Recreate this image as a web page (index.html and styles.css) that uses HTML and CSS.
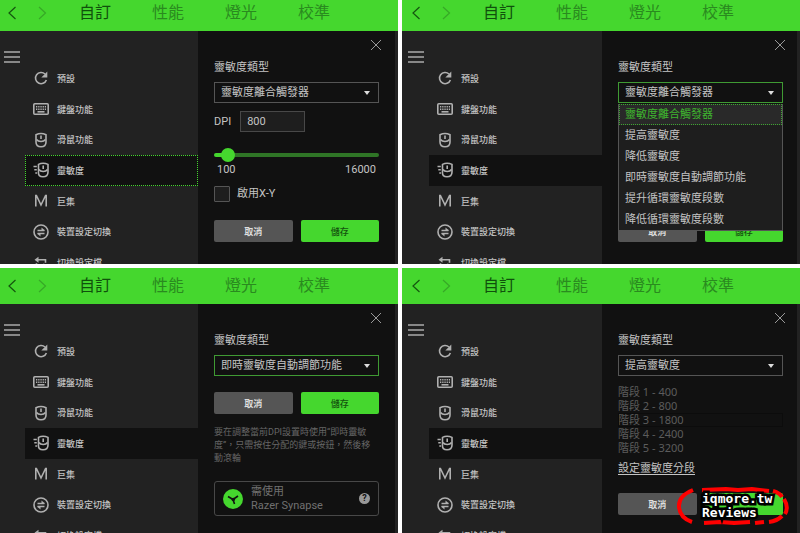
FILE: index.html
```html
<!DOCTYPE html>
<html lang="zh-Hant">

<head>
  <title>靈敏度</title>
  <meta charset="utf-8">
  <link rel="stylesheet" href="styles.css">
</head>

<body>
  <!-- icons shared by the four panels -->
  <svg class="defs" aria-hidden="true">
    <symbol id="back" viewBox="0 0 16 16"><path d="M11.500 2L5 8l6.500 6" /></symbol>
    <symbol id="forward" viewBox="0 0 16 16"><path d="M5 2l6.500 6L5 14" /></symbol>
    <symbol id="menu" viewBox="0 0 16 12"><path d="M0 1h16M0 6h16M0 11h16" /></symbol>
    <symbol id="close" viewBox="0 0 12 12"><path d="M1 1l10 10M11 1L1 11" /></symbol>
    <symbol id="reset" viewBox="0 0 16 16">
      <path d="M13.400 10A5.600 5.600 0 1 1 12 4" />
      <path class="solid" d="M14.300 1.500v6H8.300z" />
    </symbol>
    <symbol id="keyboard" viewBox="0 0 16 16">
      <rect x=".8" y="2.800" width="14.400" height="10.400" rx="1" />
      <path d="M3 5.700h10M3 8.200h10" stroke-dasharray="1.300 .9" />
      <path d="M4.500 10.800h7" />
    </symbol>
    <symbol id="mouse" viewBox="0 0 16 16">
      <path d="M3 2.800Q8 .2 13 2.800V10q0 4.800-5 4.800T3 10z" />
      <path d="M3.500 7.500Q5 9.500 8 9.500t4.500-2M8 3.500v3.500" />
    </symbol>
    <symbol id="dpi" viewBox="0 0 16 16">
      <path d="M5.500 2.400Q10 0 15 2.400V10q0 4.800-5 4.800T5.500 10z" />
      <path d="M6 7.500q1.200 2 4.200 2t4.300-2M10.200 3.500v3.500M.5 4.500h3.300M1.300 7.800h2.500M2.300 11h1.800" />
    </symbol>
    <symbol id="macro" viewBox="0 0 16 16"><path d="M2.800 13.500v-11h.6L8 12l4.600-9.500h.6v11" /></symbol>
    <symbol id="device" viewBox="0 0 16 16">
      <circle cx="8" cy="8" r="7" />
      <path d="M4.500 6.500h7M11.500 9.500h-7" />
      <path class="solid" d="M8.500 3.500v3h3.500zM7.500 12.500v-3H4z" />
    </symbol>
    <symbol id="profile" viewBox="0 0 16 16">
      <path d="M3.500 4.800h9v3M12.500 11.200h-9v-3" />
      <path class="solid" d="M5.500 1.800v6l-4-3zM10.500 14.200v-6l4 3z" />
    </symbol>
  </svg>

  <main class="board">
    <section class="panel cut">
      <header>
        <button class="arrow" aria-label="上一頁"><svg><use href="#back" /></svg></button>
        <button class="arrow next" aria-label="下一頁"><svg><use href="#forward" /></svg></button>
        <nav><a class="on" href="#">自訂</a><a href="#">性能</a><a href="#">燈光</a><a href="#">校準</a></nav>
      </header>
      <div class="content">
        <aside>
          <button class="burger" aria-label="選單"><svg><use href="#menu" /></svg></button>
          <ul class="list">
            <li><a href="#"><svg><use href="#reset" /></svg>預設</a></li>
            <li><a href="#"><svg><use href="#keyboard" /></svg>鍵盤功能</a></li>
            <li><a href="#"><svg><use href="#mouse" /></svg>滑鼠功能</a></li>
            <li><a class="on focus" href="#"><svg><use href="#dpi" /></svg>靈敏度</a></li>
            <li><a href="#"><svg><use href="#macro" /></svg>巨集</a></li>
            <li><a href="#"><svg><use href="#device" /></svg>裝置設定切換</a></li>
            <li><a href="#"><svg><use href="#profile" /></svg>切換設定檔</a></li>
          </ul>
        </aside>
        <form class="detail">
          <button type="button" class="close" aria-label="關閉"><svg><use href="#close" /></svg></button>
          <label class="title" for="type1">靈敏度類型</label>
          <div class="combo">
            <select id="type1"><option>靈敏度離合觸發器</option></select>
          </div>
          <div class="dpi">
            <label for="dpi1">DPI</label>
            <input type="text" id="dpi1" value="800">
          </div>
          <input type="range" class="slider" aria-label="DPI" min="100" max="16000" step="100" value="800">
          <div class="scale"><span>100</span><span>16000</span></div>
          <label class="check"><input type="checkbox">啟用X-Y</label>
          <div class="actions">
            <button type="button">取消</button>
            <button type="button" class="save">儲存</button>
          </div>
        </form>
      </div>
    </section>

    <section class="panel cut right">
      <header>
        <button class="arrow" aria-label="上一頁"><svg><use href="#back" /></svg></button>
        <button class="arrow next" aria-label="下一頁"><svg><use href="#forward" /></svg></button>
        <nav><a class="on" href="#">自訂</a><a href="#">性能</a><a href="#">燈光</a><a href="#">校準</a></nav>
      </header>
      <div class="content">
        <aside>
          <button class="burger" aria-label="選單"><svg><use href="#menu" /></svg></button>
          <ul class="list">
            <li><a href="#"><svg><use href="#reset" /></svg>預設</a></li>
            <li><a href="#"><svg><use href="#keyboard" /></svg>鍵盤功能</a></li>
            <li><a href="#"><svg><use href="#mouse" /></svg>滑鼠功能</a></li>
            <li><a class="on" href="#"><svg><use href="#dpi" /></svg>靈敏度</a></li>
            <li><a href="#"><svg><use href="#macro" /></svg>巨集</a></li>
            <li><a href="#"><svg><use href="#device" /></svg>裝置設定切換</a></li>
            <li><a href="#"><svg><use href="#profile" /></svg>切換設定檔</a></li>
          </ul>
        </aside>
        <form class="detail">
          <button type="button" class="close" aria-label="關閉"><svg><use href="#close" /></svg></button>
          <label class="title" for="type2">靈敏度類型</label>
          <div class="combo active open">
            <select id="type2"><option>靈敏度離合觸發器</option></select>
            <ul class="options" role="listbox">
              <li role="option" aria-selected="true" class="on">靈敏度離合觸發器</li>
              <li role="option">提高靈敏度</li>
              <li role="option">降低靈敏度</li>
              <li role="option">即時靈敏度自動調節功能</li>
              <li role="option">提升循環靈敏度段數</li>
              <li role="option">降低循環靈敏度段數</li>
            </ul>
          </div>
          <div class="actions">
            <button type="button">取消</button>
            <button type="button" class="save">儲存</button>
          </div>
        </form>
      </div>
    </section>

    <section class="panel">
      <header>
        <button class="arrow" aria-label="上一頁"><svg><use href="#back" /></svg></button>
        <button class="arrow next" aria-label="下一頁"><svg><use href="#forward" /></svg></button>
        <nav><a class="on" href="#">自訂</a><a href="#">性能</a><a href="#">燈光</a><a href="#">校準</a></nav>
      </header>
      <div class="content">
        <aside>
          <button class="burger" aria-label="選單"><svg><use href="#menu" /></svg></button>
          <ul class="list">
            <li><a href="#"><svg><use href="#reset" /></svg>預設</a></li>
            <li><a href="#"><svg><use href="#keyboard" /></svg>鍵盤功能</a></li>
            <li><a href="#"><svg><use href="#mouse" /></svg>滑鼠功能</a></li>
            <li><a class="on" href="#"><svg><use href="#dpi" /></svg>靈敏度</a></li>
            <li><a href="#"><svg><use href="#macro" /></svg>巨集</a></li>
            <li><a href="#"><svg><use href="#device" /></svg>裝置設定切換</a></li>
            <li><a href="#"><svg><use href="#profile" /></svg>切換設定檔</a></li>
          </ul>
        </aside>
        <form class="detail">
          <button type="button" class="close" aria-label="關閉"><svg><use href="#close" /></svg></button>
          <label class="title" for="type3">靈敏度類型</label>
          <div class="combo active">
            <select id="type3"><option>即時靈敏度自動調節功能</option></select>
          </div>
          <div class="actions">
            <button type="button">取消</button>
            <button type="button" class="save">儲存</button>
          </div>
          <p class="hint">要在調整當前DPI設置時使用“即時靈敏<br>度”，只需按住分配的鍵或按鈕，然後移<br>動滾輪</p>
          <div class="synapse">
            <svg class="logo" viewBox="0 0 20 20">
              <circle cx="10" cy="10" r="10" />
              <path d="M5 7.500L10 10.500L15 7M10 10.500L11.500 15" />
              <circle class="dot" cx="10.300" cy="10.500" r="1.800" />
            </svg>
            <p>需使用<br>Razer Synapse</p>
            <button type="button" class="help" aria-label="說明">?</button>
          </div>
        </form>
      </div>
    </section>

    <section class="panel right">
      <header>
        <button class="arrow" aria-label="上一頁"><svg><use href="#back" /></svg></button>
        <button class="arrow next" aria-label="下一頁"><svg><use href="#forward" /></svg></button>
        <nav><a class="on" href="#">自訂</a><a href="#">性能</a><a href="#">燈光</a><a href="#">校準</a></nav>
      </header>
      <div class="content">
        <aside>
          <button class="burger" aria-label="選單"><svg><use href="#menu" /></svg></button>
          <ul class="list">
            <li><a href="#"><svg><use href="#reset" /></svg>預設</a></li>
            <li><a href="#"><svg><use href="#keyboard" /></svg>鍵盤功能</a></li>
            <li><a href="#"><svg><use href="#mouse" /></svg>滑鼠功能</a></li>
            <li><a class="on" href="#"><svg><use href="#dpi" /></svg>靈敏度</a></li>
            <li><a href="#"><svg><use href="#macro" /></svg>巨集</a></li>
            <li><a href="#"><svg><use href="#device" /></svg>裝置設定切換</a></li>
            <li><a href="#"><svg><use href="#profile" /></svg>切換設定檔</a></li>
          </ul>
        </aside>
        <form class="detail">
          <button type="button" class="close" aria-label="關閉"><svg><use href="#close" /></svg></button>
          <label class="title" for="type4">靈敏度類型</label>
          <div class="combo">
            <select id="type4"><option>提高靈敏度</option></select>
          </div>
          <ul class="stages">
            <li>階段 1 - 400</li>
            <li>階段 2 - 800</li>
            <li class="on">階段 3 - 1800</li>
            <li>階段 4 - 2400</li>
            <li>階段 5 - 3200</li>
          </ul>
          <a class="link" href="#">設定靈敏度分段</a>
          <div class="actions">
            <button type="button">取消</button>
            <button type="button" class="save" aria-label="儲存"></button>
          </div>
        </form>
      </div>
      <div class="stamp">
        <svg viewBox="0 0 114 38">
          <path d="M17 3Q2 9 3 20q1 11 13 15M26 3l24-1 12 1 14-1 17 2M97 4q7 2 9 6M108 12q5 8 1 15M106 29q-5 5-13 6M88 35l-9 1M74 35l-16 1-14-1-16 1" />
        </svg>
        <p>iqmore.tw<br>Reviews</p>
      </div>
    </section>
  </main>
</body>

</html>
```

FILE: styles.css
```css
* {
  box-sizing: border-box;
}

body {
  margin: 0;
  background-color: white;
  font-family: Roboto, "Noto Sans CJK TC", sans-serif;
  font-size: 11px;
  color: #c4c4c4;
}

ul,
p {
  margin: 0;
  padding: 0;
  list-style: none;
}

a {
  color: inherit;
  text-decoration: none;
}

button,
input,
select {
  margin: 0;
  padding: 0;
  border: none;
  background: none;
  font: inherit;
  color: inherit;
}

svg {
  display: block;
  width: 16px;
  height: 16px;
  fill: none;
  stroke: currentColor;
  stroke-width: 1.4;
}

.solid {
  fill: currentColor;
  stroke: none;
}

.defs {
  display: none;
}

.board {
  display: grid;
  height: 100vh;
  grid-template-columns: 1fr 1fr;
  grid-template-rows: minmax(0, 264fr) minmax(0, 265fr);
  gap: 4px;
}

.panel {
  position: relative;
  display: flex;
  flex-direction: column;
  overflow: hidden;
  background-color: #222;
}

/* green tab bar */
header {
  display: flex;
  flex: none;
  align-items: center;
  gap: 14px;
  height: 36px;
  padding-left: 4px;
  background-color: #45d72e;
  color: #2a8a1f;
}

.cut header {
  margin-top: -5px;
}

.right header {
  padding-left: 6px;
}

.arrow {
  color: #14550f;
}

.arrow.next {
  color: #37a827;
}

.arrow svg {
  stroke-width: 1.2;
}

nav {
  display: flex;
  gap: 41px;
  margin-left: 15px;
  font-size: 16px;
  line-height: 20px;
}

nav .on {
  color: #10500c;
}

.content {
  display: flex;
  flex: 1;
  min-height: 0;
  border-right: 3px solid #222;
}

.right .content {
  padding-left: 2px;
}

/* side menu */
aside {
  display: flex;
  align-items: flex-start;
  flex: 0 0 198px;
}

.burger {
  flex: 0 0 25px;
  padding: 20px 0 0 4px;
  color: #aaa;
}

.burger svg {
  height: 12px;
}

.list {
  flex: 1;
  display: grid;
  grid-auto-rows: 1fr;
  height: 215px;
  margin-top: 32px;
  font-size: 9px;
  font-weight: 500;
}

.list a {
  display: flex;
  align-items: center;
  gap: 8px;
  height: 100%;
  padding-left: 8px;
}

.list svg {
  color: #b0b0b0;
  stroke-width: 1.6;
}

.list .on {
  background-color: #111;
}

.list .focus {
  border: 1px dotted #45d72e;
  padding-left: 7px;
}

/* settings on the right of each panel */
.detail {
  display: flex;
  flex-direction: column;
  flex: 1;
  min-width: 0;
  padding: 8px 16px 0;
  background-color: #111;
}

.right .detail {
  padding-right: 14px;
}

.close {
  align-self: flex-end;
  margin-right: -3px;
  color: #999;
}

.close svg {
  width: 12px;
  height: 12px;
  stroke-width: 1;
}

.title {
  margin-top: 9px;
  line-height: 16px;
}

.combo {
  position: relative;
  margin-top: 6px;
}

.combo::after {
  content: "";
  position: absolute;
  right: 9px;
  top: 9px;
  border: 3px solid transparent;
  border-top: 4px solid #ddd;
  border-bottom: none;
}

select {
  appearance: none;
  display: block;
  width: 100%;
  height: 21px;
  padding: 0 6px;
  border: 1px solid #555;
  background-color: #111;
}

.active select {
  border-color: #3f9a33;
}

.options {
  position: absolute;
  top: 22px;
  left: 0;
  right: 0;
  border: 1px solid #555;
  border-top: none;
  background-color: #1e1e1e;
}

.options li {
  padding: 0 6px;
  line-height: 21px;
}

.options .on {
  outline: 1px dotted #3fa632;
  outline-offset: -1px;
  background-color: #292929;
  color: #3fb52e;
}

.dpi {
  display: flex;
  align-items: center;
  gap: 9px;
  margin-top: 8px;
}

.dpi input {
  width: 65px;
  height: 21px;
  padding: 0 6px;
  border: 1px solid #484848;
  background-color: #1e1e1e;
}

.slider {
  appearance: none;
  width: 100%;
  height: 14px;
  margin-top: 16px;
}

.slider::-webkit-slider-runnable-track {
  height: 4px;
  border-radius: 2px;
  background: linear-gradient(to right, #45d72e 8px, #2f7526 8px);
}

.slider::-webkit-slider-thumb {
  appearance: none;
  width: 14px;
  height: 14px;
  margin-top: -5px;
  border-radius: 50%;
  background-color: #45d72e;
}

.scale {
  display: flex;
  justify-content: space-between;
  padding: 0 3px;
  line-height: 16px;
}

.check {
  display: flex;
  align-items: center;
  gap: 7px;
  margin-top: 8px;
  padding-bottom: 2px;
  line-height: 16px;
}

.check input {
  appearance: none;
  width: 16px;
  height: 16px;
  border: 1px solid #555;
  border-radius: 1px;
  background-color: #1e1e1e;
}

.actions {
  display: flex;
  gap: 8px;
  margin-top: 16px;
}

.actions button {
  flex: 1;
  height: 22px;
  border-radius: 2px;
  background-color: #555;
  font-size: 9px;
  font-weight: 700;
  color: #ddd;
}

.actions .save {
  background-color: #45d72e;
  font-weight: 500;
  color: #14550f;
}

.open + .actions {
  margin-top: 117px;
}

.hint {
  margin-top: 12px;
  font-size: 9px;
  line-height: 13px;
  color: #666;
  white-space: nowrap;
}

.synapse {
  display: flex;
  align-items: center;
  gap: 8px;
  height: 35px;
  margin-top: 16px;
  padding: 0 8px;
  border: 1px solid #484848;
  border-radius: 3px;
  line-height: 14px;
  color: #707070;
}

.synapse p {
  flex: 1;
}

.logo {
  width: 20px;
  height: 20px;
  fill: #45d72e;
  stroke: none;
}

.logo path {
  fill: none;
  stroke: #111;
  stroke-width: 1.6;
}

.logo .dot {
  fill: #111;
}

.help {
  width: 11px;
  height: 11px;
  border-radius: 50%;
  background-color: #999;
  font-size: 9px;
  font-weight: 700;
  line-height: 11px;
  color: #111;
}

.stages {
  margin-top: 9px;
  font-family: "Noto Sans", "Noto Sans CJK TC", sans-serif;
  line-height: 14px;
  color: #5c5c5c;
}

.stages .on {
  outline: 1px solid #0c0c0c;
  outline-offset: -1px;
}

.link {
  margin-top: 6px;
  line-height: 16px;
  text-decoration: underline;
  text-underline-offset: 2px;
}

/* site stamp over the lower right corner */
.stamp {
  position: absolute;
  right: 10px;
  bottom: 8px;
  width: 114px;
  height: 38px;
  padding: 5px 0 0 26px;
  font: bold 13px/14px "DejaVu Sans Mono", monospace;
  color: white;
  -webkit-text-stroke: 5px black;
  paint-order: stroke fill;
}

.stamp svg {
  position: absolute;
  top: 0;
  left: 0;
  width: 114px;
  height: 38px;
  stroke: #f00;
  stroke-width: 4;
}

.stamp p {
  position: relative;
}
```
